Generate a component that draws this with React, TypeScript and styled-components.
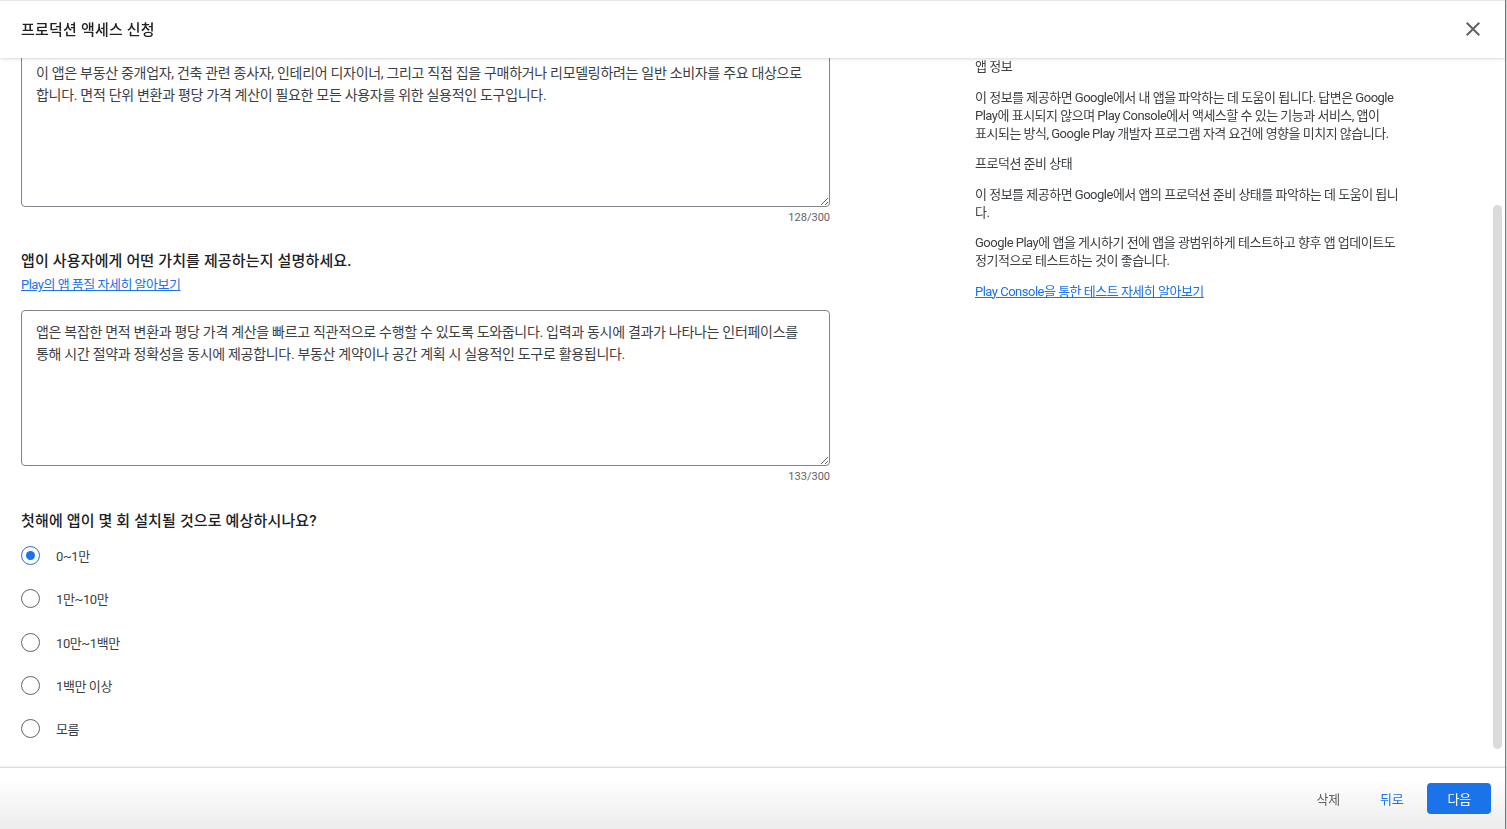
import React, { useLayoutEffect, useRef } from "react";
import styled, { createGlobalStyle } from "styled-components";

const FONT = `"Roboto", "Noto Sans CJK KR", "Noto Sans", sans-serif`;

const GlobalStyle = createGlobalStyle`
  html, body {
    margin: 0;
    padding: 0;
    height: 100%;
    overflow: hidden;
    background: #d9d9d9;
  }
  body {
    font-family: ${FONT};
    color: #3c4043;
  }
  #root { height: 100%; }
  * { box-sizing: border-box; }
`;

const Dialog = styled.div`
  display: flex;
  flex-direction: column;
  width: 1506px;
  height: 100vh;
  background: #fff;
  border-right: 1px solid #7a7a7a;
`;

const Header = styled.header`
  position: relative;
  z-index: 2;
  flex: 0 0 58px;
  display: flex;
  align-items: center;
  justify-content: space-between;
  padding: 0 20px 2px 21px;
  border-top: 1px solid #e6e6e6;
  background: #fff;
  box-shadow: 0 1px 3px rgba(0, 0, 0, 0.16);
`;

const Title = styled.h1`
  margin: 0;
  font-size: 15px;
  font-weight: 500;
  letter-spacing: 0.2px;
  color: #202124;
`;

const IconButton = styled.button`
  width: 24px;
  height: 24px;
  padding: 0;
  border: 0;
  background: none;
  display: flex;
  align-items: center;
  justify-content: center;
  cursor: pointer;
  color: #5f6368;
`;

const ScrollWrap = styled.div`
  position: relative;
  flex: 1 1 auto;
  min-height: 0;
`;

const ScrollArea = styled.div`
  height: 100%;
  overflow-y: auto;
  overflow-x: hidden;
  scrollbar-width: none;
  &::-webkit-scrollbar {
    display: none;
  }
`;

const ScrollThumb = styled.div`
  position: absolute;
  right: 3px;
  width: 9px;
  border-radius: 5px;
  background: #dadbdd;
  pointer-events: none;
`;

const ContentGrid = styled.div`
  display: grid;
  grid-template-columns: 809px 450px;
  column-gap: 145px;
  padding-left: 21px;
`;

const MainColumn = styled.div`
  padding: 24px 0 41px;
  display: flex;
  flex-direction: column;
`;

const Intro = styled.p`
  margin: 0 0 24px;
  font-size: 13px;
  letter-spacing: -0.5px;
  line-height: 18px;
  color: #3c4043;
`;

const Question = styled.h2<{ $gap?: number }>`
  margin: ${(p) => p.$gap ?? 0}px 0 0;
  font-size: 15px;
  font-weight: 500;
  letter-spacing: 0.15px;
  line-height: 22px;
  color: #202124;
`;

const Helper = styled.p`
  margin: 4px 0 0;
  font-size: 13px;
  letter-spacing: -0.5px;
  line-height: 18px;
  color: #5f6368;
`;

const Link = styled.a<{ $top?: number }>`
  display: block;
  width: max-content;
  margin-top: ${(p) => p.$top ?? 4}px;
  font-size: 13px;
  letter-spacing: -0.5px;
  line-height: 18px;
  color: #1a73e8;
  text-decoration: underline;
  cursor: pointer;
`;

const TextArea = styled.textarea<{ $top?: number }>`
  display: block;
  width: 100%;
  height: 156px;
  margin-top: ${(p) => p.$top ?? 16}px;
  padding: 10px 19px 10px 14px;
  border: 1px solid #80868b;
  border-radius: 4px;
  resize: vertical;
  font-family: ${FONT};
  font-size: 14px;
  letter-spacing: -0.3px;
  line-height: 22px;
  color: #3c4043;
  background: #fff;
  outline: none;
`;

const Counter = styled.div`
  margin-top: 4px;
  text-align: right;
  font-size: 11px;
  line-height: 14px;
  color: #5f6368;
`;

const RadioList = styled.div`
  margin-top: 2px;
  display: flex;
  flex-direction: column;
`;

const RadioRow = styled.label`
  height: 43.25px;
  display: flex;
  align-items: center;
  gap: 16px;
  cursor: pointer;
`;

const RadioCircle = styled.span<{ $checked?: boolean }>`
  width: 19px;
  height: 19px;
  border-radius: 50%;
  border: 1.6px solid ${(p) => (p.$checked ? "#1a73e8" : "#5f6368")};
  display: flex;
  align-items: center;
  justify-content: center;
  flex: 0 0 auto;

  &::after {
    content: "";
    width: 9px;
    height: 9px;
    border-radius: 50%;
    background: ${(p) => (p.$checked ? "#1a73e8" : "transparent")};
  }
`;

const RadioLabel = styled.span`
  font-size: 13px;
  letter-spacing: -0.4px;
  color: #3c4043;
`;

const SideColumn = styled.aside`
  position: sticky;
  top: 0;
  align-self: start;
  display: flex;
  flex-direction: column;
  gap: 12.5px;
`;

const SideTitle = styled.div`
  font-size: 13px;
  letter-spacing: -0.5px;
  line-height: 18px;
  color: #3c4043;
`;

const SideText = styled.p`
  margin: 0;
  font-size: 13px;
  letter-spacing: -0.5px;
  line-height: 18px;
  color: #3c4043;
`;

const Footer = styled.footer`
  position: relative;
  z-index: 2;
  flex: 0 0 62px;
  display: flex;
  align-items: center;
  justify-content: flex-end;
  gap: 8px;
  padding-right: 14px;
  border-top: 1px solid #dcdcdc;
  box-shadow: 0 -1px 2px rgba(0, 0, 0, 0.06);
  background: linear-gradient(to bottom, #ffffff 20%, #ececec 100%);
`;

const Button = styled.button<{ $variant?: "text" | "link" | "primary" }>`
  height: 31px;
  padding: 0 ${(p) => (p.$variant === "primary" ? 20 : 16)}px;
  border: 0;
  border-radius: 4px;
  font-family: ${FONT};
  font-size: 13px;
  letter-spacing: -0.2px;
  cursor: pointer;
  background: ${(p) => (p.$variant === "primary" ? "#1a73e8" : "transparent")};
  color: ${(p) =>
    p.$variant === "primary" ? "#fff" : p.$variant === "link" ? "#1a73e8" : "#5f6368"};
`;

const CloseIcon = () => (
  <svg width="24" height="24" viewBox="0 0 24 24" fill="currentColor">
    <path d="M19 6.41L17.59 5 12 10.59 6.41 5 5 6.41 10.59 12 5 17.59 6.41 19 12 13.41 17.59 19 19 17.59 13.41 12z" />
  </svg>
);

const audienceText =
  "이 앱은 부동산 중개업자, 건축 관련 종사자, 인테리어 디자이너, 그리고 직접 집을 구매하거나 리모델링하려는 일반 소비자를 주요 대상으로 합니다. 면적 단위 변환과 평당 가격 계산이 필요한 모든 사용자를 위한 실용적인 도구입니다.";

const valueText =
  "앱은 복잡한 면적 변환과 평당 가격 계산을 빠르고 직관적으로 수행할 수 있도록 도와줍니다. 입력과 동시에 결과가 나타나는 인터페이스를 통해 시간 절약과 정확성을 동시에 제공합니다. 부동산 계약이나 공간 계획 시 실용적인 도구로 활용됩니다.";

const installOptions = ["0~1만", "1만~10만", "10만~1백만", "1백만 이상", "모름"];

export default function App() {
  const scrollRef = useRef<HTMLDivElement>(null);
  const firstAreaRef = useRef<HTMLTextAreaElement>(null);
  const thumbRef = useRef<HTMLDivElement>(null);

  useLayoutEffect(() => {
    const scroller = scrollRef.current;
    const area = firstAreaRef.current;
    const thumb = thumbRef.current;
    if (!scroller || !area) return;
    const delta = area.getBoundingClientRect().bottom - 207;
    scroller.scrollTop += delta;
    if (thumb) {
      const { scrollTop, scrollHeight, clientHeight } = scroller;
      const h = (clientHeight / scrollHeight) * clientHeight;
      const t = (scrollTop / scrollHeight) * clientHeight;
      thumb.style.top = `${t}px`;
      thumb.style.height = `${h}px`;
    }
  }, []);

  return (
    <>
      <GlobalStyle />
      <Dialog>
        <Header>
          <Title>프로덕션 액세스 신청</Title>
          <IconButton aria-label="닫기">
            <CloseIcon />
          </IconButton>
        </Header>

        <ScrollWrap>
          <ScrollArea ref={scrollRef}>
            <ContentGrid>
              <MainColumn>
                <Intro>아래 질문에 답변하여 앱과 앱의 프로덕션 준비 상태에 관해 알려 주세요.</Intro>

                <Question>앱의 대상 사용자는 누구인가요?</Question>
                <Helper>앱을 사용할 것으로 예상되는 사용자를 설명하세요.</Helper>
                <Link>대상 사용자 자세히 알아보기</Link>
                <TextArea
                  ref={firstAreaRef}
                  $top={52}
                  defaultValue={audienceText}
                  spellCheck={false}
                />
                <Counter>128/300</Counter>

                <Question $gap={25}>앱이 사용자에게 어떤 가치를 제공하는지 설명하세요.</Question>
                <Link>Play의 앱 품질 자세히 알아보기</Link>
                <TextArea defaultValue={valueText} spellCheck={false} />
                <Counter>133/300</Counter>

                <Question $gap={26}>첫해에 앱이 몇 회 설치될 것으로 예상하시나요?</Question>
                <RadioList>
                  {installOptions.map((opt, i) => (
                    <RadioRow key={opt}>
                      <RadioCircle $checked={i === 0} />
                      <RadioLabel>{opt}</RadioLabel>
                    </RadioRow>
                  ))}
                </RadioList>
              </MainColumn>

              <SideColumn>
                <SideTitle>앱 정보</SideTitle>
                <SideText>
                  이 정보를 제공하면 Google에서 내 앱을 파악하는 데 도움이 됩니다. 답변은 Google
                  <br />
                  Play에 표시되지 않으며 Play Console에서 액세스할 수 있는 기능과 서비스, 앱이
                  <br />
                  표시되는 방식, Google Play 개발자 프로그램 자격 요건에 영향을 미치지 않습니다.
                </SideText>
                <SideTitle>프로덕션 준비 상태</SideTitle>
                <SideText>
                  이 정보를 제공하면 Google에서 앱의 프로덕션 준비 상태를 파악하는 데 도움이 됩니
                  <br />
                  다.
                </SideText>
                <SideText>
                  Google Play에 앱을 게시하기 전에 앱을 광범위하게 테스트하고 향후 앱 업데이트도
                  <br />
                  정기적으로 테스트하는 것이 좋습니다.
                </SideText>
                <Link $top={0}>Play Console을 통한 테스트 자세히 알아보기</Link>
              </SideColumn>
            </ContentGrid>
          </ScrollArea>
          <ScrollThumb ref={thumbRef} />
        </ScrollWrap>

        <Footer>
          <Button $variant="text">삭제</Button>
          <Button $variant="link">뒤로</Button>
          <Button $variant="primary">다음</Button>
        </Footer>
      </Dialog>
    </>
  );
}
